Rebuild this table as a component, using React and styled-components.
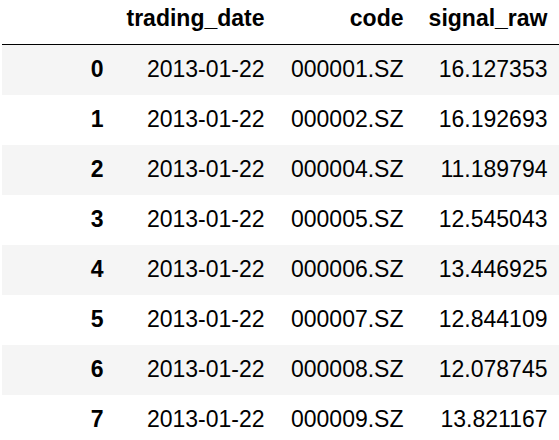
import styled, { createGlobalStyle } from 'styled-components';

const GlobalStyle = createGlobalStyle`
  html, body {
    margin: 0;
    padding: 0;
    background: #fff;
    overflow: hidden;
  }
`;

const Table = styled.table`
  margin-left: 2px;
  border-collapse: collapse;
  border-spacing: 0;
  table-layout: fixed;
  font-family: "Liberation Sans", Arial, sans-serif;
  font-size: 23px;
  line-height: normal;
  color: #000;
`;

const Head = styled.thead`
  border-bottom: 1px solid #000;
  vertical-align: bottom;
`;

const HeadCell = styled.th`
  width: ${(p) => p.w}px;
  box-sizing: border-box;
  padding: 5px 11.5px 11.5px;
  text-align: right;
  font-weight: bold;
  white-space: nowrap;
`;

const Row = styled.tr`
  height: 49.5px;
  background: ${(p) => (p.striped ? '#f5f5f5' : '#fff')};
`;

const IndexCell = styled.th`
  padding: 11.5px;
  text-align: right;
  font-weight: bold;
  vertical-align: middle;
`;

const Cell = styled.td`
  padding: 11.5px;
  text-align: right;
  vertical-align: middle;
  white-space: nowrap;
`;

const columns = [
  { label: '', w: 113.5 },
  { label: 'trading_date', w: 161 },
  { label: 'code', w: 139 },
  { label: 'signal_raw', w: 144 },
];

const rows = [
  ['000001.SZ', '16.127353'],
  ['000002.SZ', '16.192693'],
  ['000004.SZ', '11.189794'],
  ['000005.SZ', '12.545043'],
  ['000006.SZ', '13.446925'],
  ['000007.SZ', '12.844109'],
  ['000008.SZ', '12.078745'],
  ['000009.SZ', '13.821167'],
];

const App = () => (
  <>
    <GlobalStyle />
    <Table>
      <Head>
        <tr>
          {columns.map((c, i) => (
            <HeadCell key={i} w={c.w}>{c.label}</HeadCell>
          ))}
        </tr>
      </Head>
      <tbody>
        {rows.map(([code, signal], i) => (
          <Row key={i} striped={i % 2 === 0}>
            <IndexCell>{i}</IndexCell>
            <Cell>2013-01-22</Cell>
            <Cell>{code}</Cell>
            <Cell>{signal}</Cell>
          </Row>
        ))}
      </tbody>
    </Table>
  </>
);

export default App;
